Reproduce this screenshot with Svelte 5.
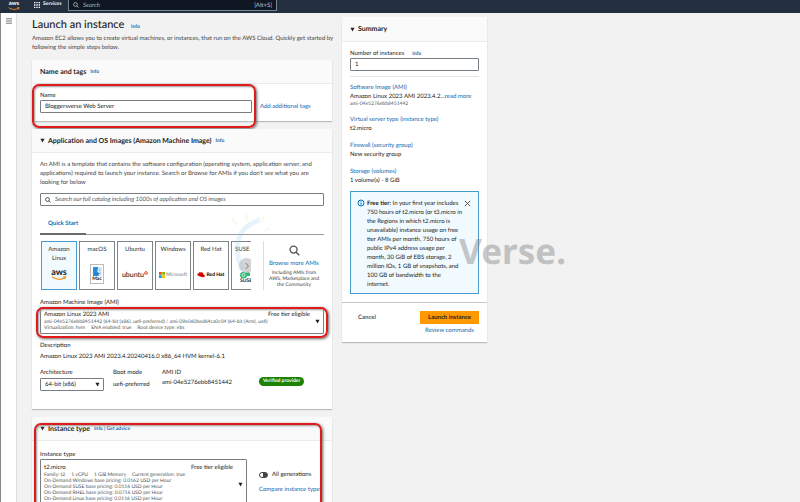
<script>
  let serverName = $state('Bloggersverse Web Server');
  let count = $state('1');
  let catalog = $state('');
  let allGenerations = $state(false);
  const systems = ['Amazon Linux', 'macOS', 'Ubuntu', 'Windows', 'Red Hat', 'SUSE Li'];
  const pricing = [
    'On-Demand Windows base pricing: 0.0162 USD per Hour',
    'On-Demand SUSE base pricing: 0.0116 USD per Hour',
    'On-Demand RHEL base pricing: 0.0716 USD per Hour',
    'On-Demand Linux base pricing: 0.0116 USD per Hour'
  ];
  const facts = [
    ['Virtual server type (instance type)', 't2.micro'],
    ['Firewall (security group)', 'New security group'],
    ['Storage (volumes)', '1 volume(s) - 8 GiB']
  ];
</script>

{#snippet caret()}
  <svg class="caret" viewBox="0 0 6 6" aria-hidden="true"><path d="M.5 1h5L3 5.5z" fill="currentColor" /></svg>
{/snippet}

{#snippet lens()}
  <svg class="lens" viewBox="0 0 12 12" aria-hidden="true"><circle cx="5" cy="5" r="3.8" /><path d="M7.8 7.8l3.4 3.4" /></svg>
{/snippet}

{#snippet aws()}
  <span class="aws">
    <b>aws</b>
    <svg viewBox="0 0 18 5" aria-hidden="true"><path d="M1 .8c5 3.600 10.500 3.600 15 .8M13.600 1.300l2.900-.4-.8 2.600" fill="none" stroke="#f59a23" stroke-width="1.300" /></svg>
  </span>
{/snippet}

<div class="page">
  <header>
    <a class="home" href="#home" aria-label="AWS home">{@render aws()}</a>
    <button class="services">
      <svg viewBox="0 0 7 7" aria-hidden="true"><path d="M0 0h1.600v1.600H0zM2.700 0h1.600v1.600H2.700zM5.400 0H7v1.600H5.400zM0 2.700h1.600v1.600H0zM2.700 2.700h1.600v1.600H2.700zM5.400 2.700H7v1.600H5.400zM0 5.400h1.600V7H0zM2.700 5.400h1.600V7H2.700zM5.400 5.400H7V7H5.400z" fill="#fff" /></svg>
      Services
    </button>
    <label class="top-search">
      {@render lens()}
      <input type="search" placeholder="Search" aria-label="Search services" />
      <span>[Alt+S]</span>
    </label>
  </header>

  <div class="shell">
    <nav>
      <button aria-label="Open navigation">
        <svg viewBox="0 0 6 6" aria-hidden="true"><path d="M0 .8h6M0 3h6M0 5.200h6" stroke="#777" /></svg>
      </button>
    </nav>

    <main>
      <div class="column">
        <div class="intro">
          <h1>Launch an instance <a class="info" href="#info">Info</a></h1>
          <p>Amazon EC2 allows you to create virtual machines, or instances, that run on the AWS Cloud. Quickly get started by<br />following the simple steps below.</p>
        </div>

        <section class="card">
          <h2>Name and tags <a class="info" href="#tags-info">Info</a></h2>
          <div class="body name-row">
            <div class="field">
              <label for="name">Name</label>
              <input id="name" class="box" bind:value={serverName} />
            </div>
            <a href="#tags">Add additional tags</a>
          </div>
          <div class="mark mark-name"></div>
        </section>

        <section class="card">
          <h2>{@render caret()} Application and OS Images (Amazon Machine Image) <a class="info" href="#ami-info">Info</a></h2>
          <div class="body">
            <p class="muted">An AMI is a template that contains the software configuration (operating system, application server, and applications) required to launch your instance. Search or Browse for AMIs if you don't see what you are looking for below</p>
            <label class="box catalog">
              {@render lens()}
              <input type="search" bind:value={catalog} aria-label="Search AMI catalog" placeholder="Search our full catalog including 1000s of application and OS images" />
            </label>
            <div class="tabs"><button>Quick Start</button></div>
            <div class="quick">
              <div class="tiles">
                {#each systems as system, i}
                  <button class="tile" class:selected={i === 0}>
                    <span class="os">{system}</span>
                    {#if i === 0}
                      {@render aws()}
                    {:else if i === 1}
                      <span class="mac">
                        <svg viewBox="0 0 9 9" aria-hidden="true"><path d="M0 0h9v9H0z" fill="#d5e9f8" /><path d="M0 0h5.200L4.300 5h1.200v4H0z" fill="#2492dc" /><path d="M2.300 2.500v1M6.800 2.500v1M1.600 6c1.800 1.500 4 1.500 5.800 0" fill="none" stroke="#184f7b" stroke-width=".6" /></svg>
                        Mac
                      </span>
                    {:else if i === 2}
                      <span class="ubuntu">ubuntu<svg viewBox="0 0 4 4" aria-hidden="true"><circle cx="2" cy="2" r="1.300" fill="none" stroke="#e95420" /><path d="M2 0v.8M.2 3l.7-.4M3.800 3l-.7-.4" stroke="#e95420" /></svg></span>
                    {:else if i === 3}
                      <span class="microsoft"><svg viewBox="0 0 6 6" aria-hidden="true"><path d="M0 0h2.800v2.800H0z" fill="#f25022" /><path d="M3.200 0H6v2.800H3.200z" fill="#7fba00" /><path d="M0 3.200h2.800V6H0z" fill="#00a4ef" /><path d="M3.200 3.200H6V6H3.200z" fill="#ffb900" /></svg>Microsoft</span>
                    {:else if i === 4}
                      <span class="redhat"><svg viewBox="0 0 9 6" aria-hidden="true"><path d="M2.200.5C3 0 4 .6 4.700.4 5.500 0 6.500.3 6.800 1.200l.4 1.700C8.500 3.300 9 4 8.800 4.800 8.300 6.200 5.600 6 3.500 5.200 1.500 4.400 0 3.300.2 2.500c.1-.5.800-.6 1.500-.5z" fill="#e00" /><path d="M1.700 2.200c.8 1.300 4 2 5.300 1.200" fill="none" stroke="#300" stroke-width=".6" /></svg>Red Hat</span>
                    {:else}
                      <span class="suse"><svg viewBox="0 0 10 7" aria-hidden="true"><path d="M0 4C0 1 3 0 5 1l3-1 2 2v3H7L6 7H2C1 7 0 6 0 4z" fill="#30ba78" /><circle cx="3.500" cy="4" r="1.500" fill="none" stroke="#fff" stroke-width=".7" /></svg>SUSE</span>
                    {/if}
                  </button>
                {/each}
                <button class="next" aria-label="Next systems"><svg viewBox="0 0 6 8" aria-hidden="true"><path d="M1.500 1l3 3-3 3" fill="none" stroke="#777" /></svg></button>
              </div>
              <div class="browse">
                {@render lens()}
                <a href="#browse">Browse more AMIs</a>
                <p>Including AMIs from AWS, Marketplace and the Community</p>
              </div>
            </div>

            <div class="ami">
              <span id="ami-label" class="label">Amazon Machine Image (AMI)</span>
              <button class="box picker" aria-labelledby="ami-label" aria-haspopup="listbox">
                <span class="first"><span>Amazon Linux 2023 AMI</span><span>Free tier eligible</span></span>
                <small>ami-04e5276ebb8451442 (64-bit (x86), uefi-preferred) / ami-09e060bed64ca0c04 (64-bit (Arm), uefi)</small>
                <small class="spread"><span>Virtualization: hvm</span><span>ENA enabled: true</span><span>Root device type: ebs</span></small>
                {@render caret()}
              </button>
              <div class="mark mark-ami"></div>
            </div>

            <div class="label">Description</div>
            <p class="description">Amazon Linux 2023 AMI 2023.4.20240416.0 x86_64 HVM kernel-6.1</p>
            <div class="specs">
              <div class="field">
                <label for="arch">Architecture</label>
                <div class="select"><select id="arch" class="box"><option>64-bit (x86)</option></select>{@render caret()}</div>
              </div>
              <div><div class="label">Boot mode</div><p class="boot">uefi-preferred</p></div>
              <div><div class="label">AMI ID</div><p>ami-04e5276ebb8451442</p></div>
              <span class="badge">Verified provider</span>
            </div>
          </div>
        </section>

        <section class="card">
          <h2>{@render caret()} Instance type <span class="info"><a href="#type-info">Info</a> | <a href="#advice">Get advice</a></span></h2>
          <div class="body type-row">
            <div class="field">
              <span id="type-label" class="label">Instance type</span>
              <button class="box picker tall" aria-labelledby="type-label" aria-haspopup="listbox">
                <span class="first"><span>t2.micro</span><span>Free tier eligible</span></span>
                <small class="spread"><span>Family: t2</span><span>1 vCPU</span><span>1 GiB Memory</span><span>Current generation: true</span></small>
                {#each pricing as line}<small>{line}</small>{/each}
                {@render caret()}
              </button>
            </div>
            <div class="options">
              <label class="toggle"><input type="checkbox" bind:checked={allGenerations} />All generations</label>
              <a href="#compare">Compare instance types</a>
            </div>
          </div>
          <div class="mark mark-type"></div>
        </section>
      </div>

      <aside class="card">
        <h2>{@render caret()} Summary</h2>
        <div class="body">
          <div class="count-label"><label for="count">Number of instances</label><a class="info" href="#count-info">Info</a></div>
          <input id="count" class="box" bind:value={count} />
          <hr />
          <div class="facts">
            <div class="fact">
              <a href="#image">Software Image (AMI)</a>
              <p>Amazon Linux 2023 AMI 2023.4.2...<a href="#more">read more</a></p>
              <small>ami-04e5276ebb8451442</small>
            </div>
            {#each facts as [title, value]}
              <div class="fact"><a href="#details">{title}</a><p>{value}</p></div>
            {/each}
          </div>
          <div class="notice">
            <svg viewBox="0 0 8 8" aria-hidden="true"><circle cx="4" cy="4" r="3" fill="none" stroke="#0073bb" /><path d="M4 2.200v.8M4 3.600v2.200" stroke="#0073bb" /></svg>
            <p><b>Free tier:</b> In your first year includes 750 hours of t2.micro (or t3.micro in the Regions in which t2.micro is unavailable) instance usage on free tier AMIs per month, 750 hours of public IPv4 address usage per month, 30 GiB of EBS storage, 2 million IOs, 1 GB of snapshots, and 100 GB of bandwidth to the internet.</p>
            <button aria-label="Dismiss"><svg viewBox="0 0 8 8" aria-hidden="true"><path d="M1 1l6 6M7 1L1 7" stroke="#444" /></svg></button>
          </div>
        </div>
        <footer>
          <button class="cancel">Cancel</button>
          <div><button class="launch">Launch instance</button><a href="#review">Review commands</a></div>
        </footer>
      </aside>
    </main>
  </div>

  <div class="watermark" aria-hidden="true">
    <svg viewBox="0 0 60 70"><path d="M30 8C8 14 2 34 12 58" fill="none" stroke="#8cc8f0" stroke-width="5" /><path d="M2 6l5 7M16 0l1 9M34 4l-3 6M40 16l-5 3" stroke="#f5dc8c" stroke-width="2" /></svg>
    <span>Verse.</span>
  </div>
</div>

<style>
  :global(body) { margin: 0; }
  .page, .page * { box-sizing: border-box; }
  .page {
    position: relative;
    display: flex;
    flex-direction: column;
    height: 100vh;
    overflow: hidden;
    background: #f2f2f2;
    color: #222;
    font: 6px/9px Lato, "Open Sans", sans-serif;
    text-rendering: geometricPrecision;
  }
  p, h1, h2 { margin: 0; }
  a { color: #1169ae; text-decoration: none; }
  button, input, select { font: inherit; color: inherit; text-rendering: inherit; padding: 0; border: 0; background: none; border-radius: 0; outline: 0; }
  svg { display: block; flex: none; }
  small { display: block; font-size: 5px; line-height: 6px; color: #50585c; }

  header { flex: none; display: flex; align-items: flex-start; height: 13px; background: #232f3e; color: #fff; }
  .home { width: 34px; padding-left: 8px; color: #fff; }
  .aws { display: flex; flex-direction: column; align-items: center; width: 12px; }
  .aws b { font-size: 6px; line-height: 7px; }
  .aws svg { width: 12px; }
  .services { display: flex; align-items: center; gap: 3px; width: 34px; height: 9px; font-size: 5px; font-weight: 700; }
  .services svg { width: 6px; }
  .top-search { display: flex; align-items: center; gap: 4px; width: 209px; height: 11px; padding: 0 4px; border: 1px solid #7b8794; border-top: 0; background: #0f1722; color: #bfc5cb; }
  .top-search input { flex: 1; min-width: 0; font-style: italic; }
  .top-search input::placeholder { color: #a9b0b6; opacity: 1; }
  .lens { width: 6px; fill: none; stroke: currentColor; stroke-width: 1.5; }

  .shell { flex: 1; display: flex; min-height: 0; border-left: 1px solid #888; }
  nav { width: 16px; padding: 5px; background: #fff; border-right: 1px solid #ddd; }
  nav svg { width: 6px; }
  main { flex: 1; display: grid; grid-template-columns: minmax(0, 300px) minmax(0, 145px); gap: 10px; align-items: start; padding: 4px 0 0 15px; }
  .column { display: grid; grid-template-columns: minmax(0, 1fr); gap: 8px; }
  h1 { font-size: 11px; line-height: 16px; font-weight: 500; color: #222; }
  .intro p { margin-top: 1px; color: #444; white-space: nowrap; }
  .info, .info a { font-size: 5px; line-height: 6px; font-weight: 700; color: #1169ae; }
  h1 .info, h2 .info { margin-left: 4px; }

  .card { position: relative; background: #fff; box-shadow: 0 1px 1px #bbb; }
  h2 { display: flex; align-items: center; height: 24px; padding: 0 8px; background: #fafafa; border-bottom: 1px solid #e9ebed; font-size: 7px; line-height: 10px; font-weight: 700; color: #222; }
  .caret { width: 5px; height: 5px; color: #222; }
  h2 .caret { margin-right: 3px; }
  .body { padding: 7px 8px 8px; }
  .field label, .label { display: block; }
  .box { display: block; width: 100%; height: 13px; padding: 0 4px; border: 1px solid #777f85; border-radius: 1px; background: #fff; }
  .name-row, .type-row { display: flex; gap: 8px; }
  .name-row { align-items: flex-end; }
  .name-row .field { flex: 0 0 212px; }
  .name-row > a { padding-bottom: 2px; }
  .mark { position: absolute; border: 2px solid #e01b1b; border-radius: 7px; box-shadow: 1px 1px 3px #666, inset 1px 1px 2px #999; pointer-events: none; }
  .mark-name { inset: 24px 76px -7px 0; }
  .mark-ami { inset: 9px -4px -4px; }
  .mark-type { inset: 6px 10px -4px 2px; }

  .muted { color: #444; }
  .catalog { display: flex; align-items: center; gap: 4px; margin-top: 6px; }
  .catalog input { flex: 1; min-width: 0; font-style: italic; }
  .catalog input::placeholder { color: #50585c; opacity: 1; }
  .tabs { margin-top: 9px; border-bottom: 1px solid #9a9a9a; height: 20px; }
  .tabs button { display: block; height: 20px; padding: 0 8px 2px; border-bottom: 2px solid #6b6b6b; color: #0073bb; font-weight: 700; }
  .quick { display: flex; margin-top: 6px; height: 49px; }
  .tiles { position: relative; display: flex; gap: 2px; width: 211px; padding-left: 1px; overflow: hidden; }
  .tile { flex: none; display: flex; flex-direction: column; align-items: center; justify-content: space-between; width: 36px; padding: 3px 2px 9px; border: 1px solid #7d8588; }
  .tile:nth-child(6) { align-items: flex-start; padding-left: 3px; padding-bottom: 4px; white-space: nowrap; }
  .tile.selected { border-color: #4a9bcb; background: #f1faff; }
  .os { color: #333; padding: 0 2px; }
  .tile:nth-child(6) .os { padding: 0; }
  .tile .aws { width: 17px; }
  .tile .aws b { font-size: 9px; line-height: 8px; }
  .tile .aws svg { width: 16px; }
  .mac { display: flex; flex-direction: column; align-items: center; width: 14px; padding-top: 2px; margin-bottom: -4px; border: 1px solid #bbb; font-size: 5px; line-height: 7px; font-weight: 700; }
  .mac svg { width: 9px; }
  .ubuntu { display: flex; font-size: 7px; line-height: 10px; font-weight: 500; color: #222; }
  .ubuntu svg { width: 4px; height: 4px; margin-top: 1px; }
  .microsoft, .redhat { display: flex; align-items: center; gap: 1px; font-size: 5px; line-height: 10px; color: #777; }
  .microsoft svg { width: 6px; }
  .redhat { font-weight: 900; color: #111; white-space: nowrap; }
  .redhat svg { width: 8px; }
  .suse { font-size: 5px; line-height: 7px; font-weight: 700; padding-left: 5px; text-align: left; }
  .suse svg { width: 10px; }
  .next { position: absolute; right: -3px; top: 17px; display: grid; place-items: center; width: 15px; height: 15px; border-radius: 50%; background: #ccccccd9; }
  .next svg { width: 6px; }
  .browse { flex: 1; display: flex; flex-direction: column; align-items: center; margin-left: 12px; padding: 4px 2px 0; border-left: 1px solid #ddd; text-align: center; white-space: nowrap; }
  .browse .lens { width: 11px; color: #555; }
  .browse > a { margin: 3px 0 2px; }
  .browse p { max-width: 52px; font-size: 5px; line-height: 6px; color: #444; white-space: normal; }
  .ami { position: relative; margin: 8px 0 7px; }
  .picker { position: relative; height: auto; padding: 3px 13px 2px 3px; text-align: left; }
  .picker .first { display: flex; justify-content: space-between; line-height: 8px; }
  .picker .caret { position: absolute; right: 3px; top: 50%; margin-top: -2px; }
  .spread { display: flex; gap: 6px; }
  .description { margin-top: 2px; }
  .specs { display: flex; margin-top: 7px; padding-bottom: 10px; }
  .specs > :nth-child(1) { width: 64px; margin-right: 9px; }
  .specs > :nth-child(2) { width: 49px; }
  .specs > :nth-child(3) { width: 97px; }
  .specs p { margin-top: 1px; }
  .specs .boot { margin-top: 3px; }
  .select { position: relative; margin-top: 1px; }
  .select select { appearance: none; }
  .select .caret { position: absolute; right: 4px; top: 4px; pointer-events: none; }
  .badge { align-self: flex-start; margin-top: 9px; padding: 0 4px; border-radius: 5px; background: #1d8102; color: #fff; font-size: 5px; font-weight: 700; }

  .type-row .field { flex: 0 0 207px; }
  .type-row { padding-top: 9px; gap: 12px; }
  .picker.tall { padding-bottom: 5px; }
  .picker.tall .first { line-height: 9px; }
  .options { display: grid; align-content: start; gap: 6px; padding-top: 20px; white-space: nowrap; }
  .toggle { display: flex; align-items: center; gap: 4px; }
  .toggle input { appearance: none; width: 9px; height: 6px; margin: 0; border: 1px solid #444; border-radius: 3px; background: linear-gradient(90deg, #fff 50%, #444 50%); }

  aside h2 { height: 25px; }
  .count-label { display: flex; align-items: center; gap: 8px; }
  hr { margin: 5px 0 6px; border: 0; border-top: 1px solid #e3e5e7; }
  .facts { display: grid; gap: 8px; margin-bottom: 6px; }
  .fact > a { display: block; }
  .fact p { white-space: nowrap; }
  .notice { display: flex; gap: 2px; padding: 7px 7px 4px 6px; border: 1px solid #4a9bcb; background: #f1faff; }
  .notice > svg { align-self: flex-start; width: 8px; }
  .notice p { flex: 1; }
  .notice button { align-self: flex-start; margin-top: 1px; }
  .notice button svg { width: 7px; }
  footer { display: flex; justify-content: space-between; padding: 8px 8px 7px 16px; border-top: 1px solid #c4c8ca; }
  footer > div { display: flex; flex-direction: column; align-items: center; gap: 2px; }
  .cancel { height: 13px; font-weight: 700; color: #545b64; }
  .launch { width: 59px; height: 13px; background: #ff9900; color: #222; font-weight: 700; }

  .watermark { position: absolute; left: 230px; top: 212px; display: flex; justify-content: space-between; width: 336px; pointer-events: none; color: #888; font: 700 35px/80px "Noto Sans", sans-serif; }
  .watermark svg { width: 60px; height: 70px; opacity: .2; }
  .watermark span { opacity: .45; }
</style>
